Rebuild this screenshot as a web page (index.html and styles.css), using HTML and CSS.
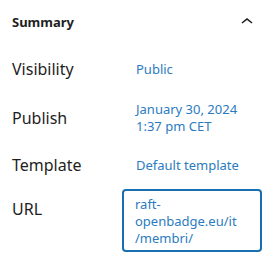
FILE: index.html
```html
<!DOCTYPE html>
<html>
<head>
<meta charset="utf-8">
<link rel="stylesheet" href="styles.css">
</head>
<body>
<div class="panel">
  <div class="panel-header">
    <span class="panel-title">Summary</span>
    <svg class="chevron" width="24" height="24" viewBox="0 0 24 24"><path d="M6.5 12.4L12 8l5.5 4.4-.9 1.2L12 10l-4.6 3.6z" fill="#1e1e1e"/></svg>
  </div>
  <div class="rows">
    <div class="row row-vis">
      <span class="label">Visibility</span>
      <span class="value">Public</span>
    </div>
    <div class="row row-pub">
      <span class="label">Publish</span>
      <span class="value value-date">January 30, 2024<br>1:37 pm CET</span>
    </div>
    <div class="row row-tpl">
      <span class="label">Template</span>
      <span class="value">Default template</span>
    </div>
    <div class="row row-url">
      <span class="label label-url">URL</span>
      <span class="url-box">raft-<br>openbadge.eu/it<br>/membri/</span>
    </div>
  </div>
</div>
</body>
</html>
```

FILE: styles.css
```css
html, body {
  margin: 0;
  padding: 0;
  background: #fff;
}
body {
  font-family: "Noto Sans", "Open Sans", sans-serif;
  color: #1e1e1e;
  width: 266px;
  overflow: hidden;
}
.panel {
  padding: 0 4px 0 12px;
}
.panel-header {
  height: 44px;
  display: flex;
  align-items: center;
  justify-content: space-between;
}
.panel-title {
  font-size: 13px;
  font-weight: 700;
}
.chevron {
  margin-right: 3px;
}
.rows {
  display: flex;
  flex-direction: column;
  padding-top: 8px;
}
.row {
  display: flex;
  align-items: center;
  min-height: 34px;
}
.row-pub { margin-top: 14px; }
.row-tpl { margin-top: 13px; }
.row-url { margin-top: 7px; align-items: flex-start; }
.label {
  width: 124px;
  flex: none;
  font-size: 16px;
  line-height: 20px;
}
.label-url {
  width: 110px;
  padding-top: 10px;
}
.value {
  font-size: 13px;
  line-height: 16px;
  color: #2b7bbf;
}
.value-date {
  line-height: 17px;
  padding-top: 1px;
}
.url-box {
  font-size: 13px;
  line-height: 17px;
  color: #2b7bbf;
  border: 2px solid #1a6fb0;
  border-radius: 4px;
  width: 140px;
  box-sizing: border-box;
  padding: 5px 8px 3px 11px;
}
```
